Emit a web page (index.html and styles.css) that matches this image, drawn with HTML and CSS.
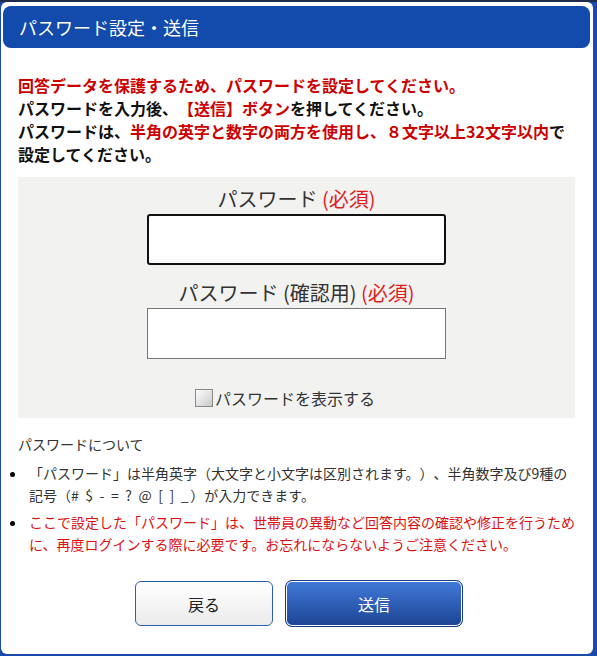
FILE: index.html
```html
<!DOCTYPE html>
<html lang="ja">
<head>
<meta charset="utf-8">
<title>パスワード設定・送信</title>
<link rel="stylesheet" href="styles.css">
</head>
<body>
<div class="topbar"></div>
<div class="dialog">
  <div class="dialog-header">パスワード設定・送信</div>
  <div class="dialog-body">
    <p class="intro">
      <span class="red">回答データを保護するため、パスワードを設定してください。</span><br>
      パスワードを入力後、<span class="red">【送信】ボタン</span>を押してください。<br>
      パスワードは、<span class="red">半角の英字と数字の両方を使用し、８文字以上32文字以内</span>で<br>
      設定してください。
    </p>
    <div class="form-box">
      <label class="field-label" for="pw1">パスワード <span class="req">(必須)</span></label>
      <input class="pw-input focused" id="pw1" type="password">
      <label class="field-label second" for="pw2">パスワード (確認用) <span class="req">(必須)</span></label>
      <input class="pw-input" id="pw2" type="password">
      <div class="show-row">
        <input class="cb" type="checkbox" id="show"><label for="show" class="cb-label">パスワードを表示する</label>
      </div>
    </div>
    <div class="notes-title">パスワードについて</div>
    <ul class="notes">
      <li><span>「パスワード」は半角英字（大文字と小文字は区別されます。）、半角数字及び9種の<br>記号（<span class="symbols"># $ - = ? @ [ ] _</span>）が入力できます。</span></li>
      <li><span class="note-red">ここで設定した「パスワード」は、世帯員の異動など回答内容の確認や修正を行うため<br>に、再度ログインする際に必要です。お忘れにならないようご注意ください。</span></li>
    </ul>
    <div class="buttons">
      <button class="btn btn-back" type="button">戻る</button>
      <button class="btn btn-send" type="button">送信</button>
    </div>
  </div>
</div>
</body>
</html>
```
FILE: styles.css
```css
html, body {
  margin: 0;
  padding: 0;
}
body {
  width: 597px;
  height: 656px;
  background: #1a4aab;
  display: flex;
  flex-direction: column;
  font-family: "Noto Sans CJK JP", "Noto Sans", sans-serif;
  text-spacing-trim: space-all;
  overflow: hidden;
}
.topbar {
  height: 2px;
  background: #1f2d4b;
  flex: none;
}
.dialog {
  flex: 1;
  margin: 0 4px 2px 1px;
  background: #fff;
  border-radius: 6px;
  padding: 4px 3px 0 2px;
  box-sizing: border-box;
}
.dialog-header {
  height: 42px;
  background: #124bab;
  border-radius: 8px;
  color: #fff;
  font-size: 18px;
  line-height: 42px;
  padding-left: 16px;
}
.dialog-body {
  padding: 26px 15px 0 15px;
}
.intro {
  margin: 0;
  font-size: 16px;
  line-height: 23px;
  font-weight: bold;
  color: #111;
  white-space: nowrap;
}
.red {
  color: #cc0000;
}
.form-box {
  margin-top: 11px;
  background: #f2f2f0;
  padding: 9px 0 9px 0;
  display: flex;
  flex-direction: column;
  align-items: center;
}
.field-label {
  font-size: 20px;
  line-height: 26px;
  color: #333;
  margin-bottom: 2px;
}
.field-label.second {
  margin-top: 15px;
}
.req {
  color: #e0201c;
}
.pw-input {
  width: 299px;
  height: 51px;
  box-sizing: border-box;
  border: 1px solid #767676;
  border-radius: 0;
  background: #fff;
  margin: 0;
  padding: 0 6px;
  outline: none;
}
.pw-input.focused {
  border: 2px solid #111;
  border-radius: 3px;
}
.show-row {
  margin-top: 28px;
  height: 22px;
  display: flex;
  align-items: center;
  padding-right: 23px;
}
.cb {
  appearance: none;
  -webkit-appearance: none;
  width: 18px;
  height: 18px;
  margin: 0 2px 0 0;
  box-sizing: border-box;
  border: 1px solid #8a8a8a;
  background: linear-gradient(135deg, #fdfdfd 0%, #e2e2e2 55%, #c8c8c8 100%);
}
.cb-label {
  font-size: 16px;
  line-height: 22px;
  color: #333;
}
.notes-title {
  margin-top: 16px;
  font-size: 14px;
  line-height: 21px;
  color: #333;
}
.notes {
  list-style: none;
  margin: 8px 0 0 -8px;
  padding: 0;
  font-size: 14px;
  line-height: 21.5px;
  color: #333;
  display: flex;
  flex-direction: column;
  gap: 6px;
}
.notes li {
  display: flex;
  white-space: nowrap;
}
.notes li::before {
  content: "";
  width: 5px;
  height: 5px;
  border-radius: 50%;
  background: #000;
  margin: 9px 14px 0 0;
  flex: none;
}
.symbols {
  letter-spacing: 1.7px;
}
.note-red {
  color: #dd1111;
}
.buttons {
  margin-top: 25px;
  display: flex;
  justify-content: center;
  align-items: center;
  gap: 12px;
  padding-left: 5px;
}
.btn {
  font-family: "Noto Sans CJK JP", "Noto Sans", sans-serif;
  font-size: 16px;
  cursor: pointer;
  padding: 0;
  margin: 0;
}
.btn-back {
  width: 138px;
  height: 45px;
  border: 1px solid #2c5db6;
  border-radius: 6px;
  background: linear-gradient(#ffffff, #ebebeb);
  color: #222;
}
.btn-send {
  width: 178px;
  height: 47px;
  border: 1px solid #173c88;
  border-radius: 7px;
  box-shadow: inset 0 0 0 1px #ffffff;
  background: linear-gradient(#417ad9, #1d4494);
  color: #fff;
}
```
